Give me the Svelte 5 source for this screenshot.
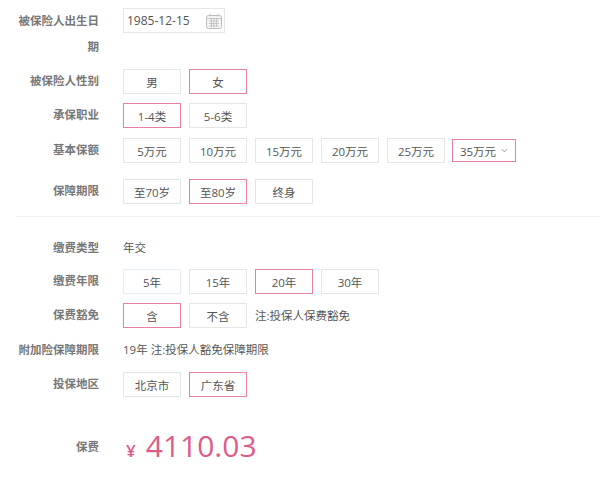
<script lang="ts">
	const upperRows = [
		{ label: '被保险人性别', gap: 'g9', options: ['男', '女'], active: '女' },
		{ label: '承保职业', gap: 'g10', options: ['1-4类', '5-6类'], active: '1-4类' },
		{ label: '基本保额', gap: 'g16', options: ['5万元', '10万元', '15万元', '20万元', '25万元'], active: '', more: '35万元' },
		{ label: '保障期限', gap: 'g0', options: ['至70岁', '至80岁', '终身'], active: '至80岁' }
	];
</script>

<div class="form">
	<div class="row g9">
		<div class="label two-line">被保险人出生日期</div>
		<div class="date">
			<span>1985-12-15</span>
			<svg viewBox="0 0 16 16" width="16" height="16" aria-hidden="true">
				<rect x="0.5" y="2.5" width="15" height="13" rx="2" fill="#f6f6f6" stroke="#bbb" />
				<path d="M4 0.5v3M12 0.5v3M0.5 5.5h15M3 8h10M3 10.5h10M3 13h10M5.5 6v8M8 6v8M10.5 6v8" fill="none" stroke="#c4c4c4" />
			</svg>
		</div>
	</div>

	{#each upperRows as row}
		<div class="row {row.gap}">
			<div class="label">{row.label}</div>
			<div class="options">
				{#each row.options as opt}
					<button class:active={opt === row.active}>{opt}</button>
				{/each}
				{#if row.more}
					<button class="more active">
						{row.more}
						<svg viewBox="0 0 8 5" width="7" height="5" aria-hidden="true">
							<path d="M1 1l3 3 3-3" fill="none" stroke="#888" />
						</svg>
					</button>
				{/if}
			</div>
		</div>
	{/each}

	<hr />

	<div class="row text-row first">
		<div class="label">缴费类型</div>
		<div class="value">年交</div>
	</div>

	<div class="row g9">
		<div class="label">缴费年限</div>
		<div class="options">
			<button class="focus">5年</button>
			<button>15年</button>
			<button class="active">20年</button>
			<button>30年</button>
		</div>
	</div>

	<div class="row g9">
		<div class="label">保费豁免</div>
		<div class="options">
			<button class="active">含</button>
			<button>不含</button>
			<span class="value note">注:投保人保费豁免</span>
		</div>
	</div>

	<div class="row text-row extra">
		<div class="label">附加险保障期限</div>
		<div class="value">19年 注:投保人豁免保障期限</div>
	</div>

	<div class="row">
		<div class="label">投保地区</div>
		<div class="options">
			<button>北京市</button>
			<button class="active">广东省</button>
		</div>
	</div>

	<div class="row fee">
		<div class="label">保费</div>
		<div class="price"><span class="yen">¥</span><span class="amount">4110.03</span></div>
	</div>
</div>

<style>
	:global(body) {
		margin: 0;
		background: #fff;
	}

	.form {
		padding-top: 8px;
		height: 474px;
		overflow: hidden;
		font-family: 'Open Sans', 'Noto Sans CJK SC', sans-serif;
		font-size: 11.5px;
		color: #555;
	}

	.row {
		display: flex;
		align-items: flex-start;
		padding-left: 16px;
	}

	.g0 { margin-bottom: 0; }
	.g9 { margin-bottom: 9px; }
	.g10 { margin-bottom: 10px; }
	.g16 { margin-bottom: 16px; }

	.label {
		width: 83px;
		flex-shrink: 0;
		margin-right: 24px;
		line-height: 23px;
		text-align: right;
		font-weight: 700;
		color: #777;
		word-break: break-all;
	}

	.two-line {
		line-height: 26px;
	}

	.options {
		display: flex;
		align-items: center;
		gap: 8px;
	}

	button {
		width: 58px;
		height: 25px;
		padding: 0;
		box-sizing: border-box;
		background: #fff;
		border: 1px solid #e6e6e6;
		font: inherit;
		color: #555;
	}

	button.active {
		border-color: #e97fa5;
	}

	button.focus {
		border-color: #e4eefb;
	}

	button.more {
		width: 64px;
		height: 23px;
		margin-left: -1px;
		display: flex;
		align-items: center;
		justify-content: center;
		gap: 5px;
	}

	.date {
		width: 102px;
		height: 25px;
		box-sizing: border-box;
		border: 1px solid #e6e6e6;
		display: flex;
		align-items: center;
		justify-content: space-between;
		padding: 0 2px 0 3px;
		font-size: 12px;
		color: #555;
	}

	hr {
		margin: 12px 0 0 16px;
		border: 0;
		border-top: 1px solid #eee;
	}

	.value {
		line-height: 23px;
	}

	.note {
		margin-left: 0;
	}

	.first {
		margin-top: 19px;
		margin-bottom: 10px;
	}

	.extra {
		margin-top: 10px;
		margin-bottom: 11px;
	}

	.fee {
		margin-top: 30px;
		align-items: center;
	}

	.price {
		display: flex;
		align-items: baseline;
		color: #e05c86;
		margin-left: 3px;
	}

	.yen {
		font-size: 17px;
		font-weight: 600;
		margin-right: 10px;
	}

	.amount {
		font-size: 30px;
		line-height: 38px;
	}
</style>
